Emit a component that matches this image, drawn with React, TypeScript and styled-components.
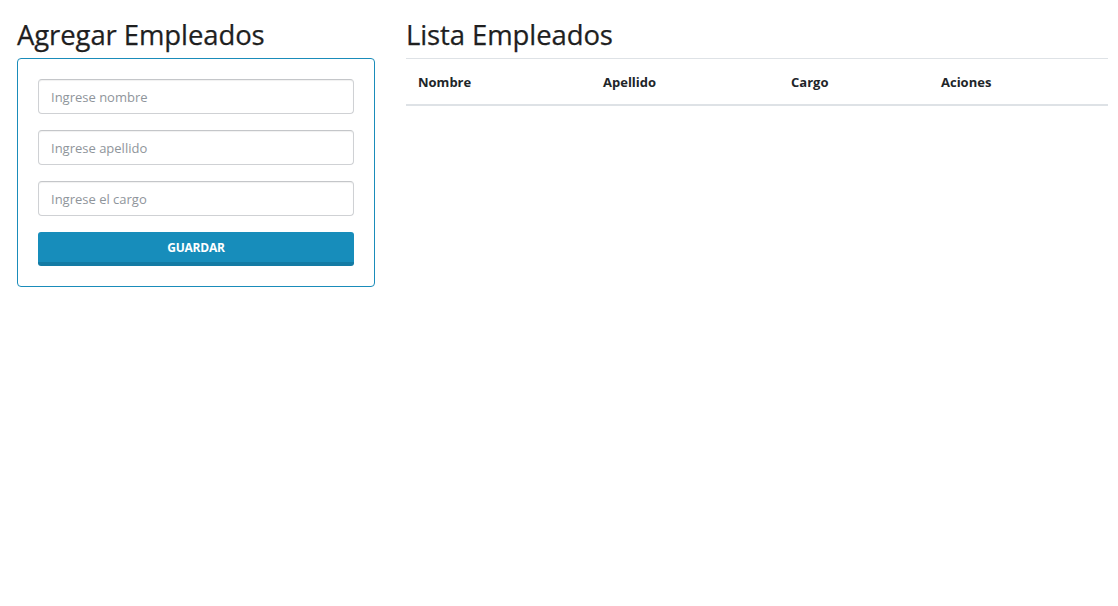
import React from "react";
import styled, { createGlobalStyle } from "styled-components";

const GlobalStyle = createGlobalStyle`
    body {
        margin: 0;
        padding: 0;
        background: #fff;
        font-family: "Open Sans", "Noto Sans", sans-serif;
        color: #212529;
    }
    * {
        box-sizing: border-box;
    }
`;

const App = () => {
    return (
        <>
            <GlobalStyle />
            <Page>
                <Column>
                    <Title>Agregar Empleados</Title>
                    <Card>
                        <Input placeholder="Ingrese nombre" />
                        <Input placeholder="Ingrese apellido" />
                        <Input placeholder="Ingrese el cargo" />
                        <SaveButton>GUARDAR</SaveButton>
                    </Card>
                </Column>
                <Column>
                    <Title>Lista Empleados</Title>
                    <Table>
                        <thead>
                            <tr>
                                <Th $width={185}>Nombre</Th>
                                <Th $width={188}>Apellido</Th>
                                <Th $width={150}>Cargo</Th>
                                <Th>Aciones</Th>
                            </tr>
                        </thead>
                        <tbody />
                    </Table>
                </Column>
            </Page>
        </>
    );
};

const Page = styled.div`
    display: grid;
    grid-template-columns: 358px 702px;
    column-gap: 31px;
    padding: 18px 0 0 17px;
`;

const Column = styled.div`
    display: flex;
    flex-direction: column;
`;

const Title = styled.h3`
    margin: 0 0 6px 0;
    font-size: 27.5px;
    font-weight: 500;
    line-height: 34px;
    color: #1f1f1f;
    letter-spacing: -0.1px;
    -webkit-text-stroke: 0.25px #1f1f1f;
`;

const Card = styled.div`
    display: flex;
    flex-direction: column;
    gap: 16px;
    border: 1px solid #1a8cba;
    border-radius: 4px;
    padding: 20px;
`;

const Input = styled.input`
    height: 35px;
    width: 100%;
    padding: 1px 12px 0 12px;
    border: 1px solid #cfd1d4;
    border-top-color: #c4c6c9;
    border-radius: 4px;
    font-family: inherit;
    font-size: 13px;
    color: #495057;
    outline: none;
    box-shadow: inset 0 1px 1px rgba(0, 0, 0, 0.06);

    &::placeholder {
        color: #8f959b;
    }
`;

const SaveButton = styled.button`
    height: 34px;
    width: 100%;
    border: none;
    border-bottom: 4px solid #137ba4;
    border-radius: 3px;
    background: #178dbb;
    color: #fff;
    font-family: inherit;
    font-weight: 700;
    font-size: 12px;
    letter-spacing: -0.2px;
    cursor: pointer;
    padding: 1px 0 0 0;
`;

const Table = styled.table`
    width: 100%;
    border-collapse: collapse;
    border-top: 1px solid #dee2e6;
    font-size: 13px;
`;

const Th = styled.th<{ $width?: number }>`
    text-align: left;
    font-weight: 700;
    padding: 14px 12px 12px 12px;
    line-height: 19px;
    border-bottom: 2px solid #dee2e6;
    ${({ $width }) => ($width ? `width: ${$width}px;` : "")}
`;

export default App;
